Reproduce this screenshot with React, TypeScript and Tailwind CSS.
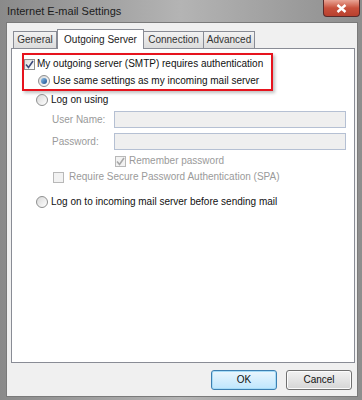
import React from 'react';

const font = { fontFamily: '"Liberation Sans", Arial, sans-serif' };

function Check({ checked, disabled }: { checked?: boolean; disabled?: boolean }) {
  return (
    <span
      className={`inline-flex h-[11px] w-[11px] shrink-0 items-center justify-center border ${
        disabled ? 'border-[#b8b8b8] bg-[#f2f2f2]' : 'border-[#8e8f8f] bg-gradient-to-br from-[#dcdcdc] to-white'
      }`}
    >
      {checked && (
        <svg width="9" height="9" viewBox="0 0 9 9">
          <path
            d="M1 4.5 L3.5 7.5 L8 1"
            fill="none"
            stroke={disabled ? '#a8a8a8' : '#3c4a7a'}
            strokeWidth="1.6"
          />
        </svg>
      )}
    </span>
  );
}

function Radio({ checked }: { checked?: boolean }) {
  return (
    <span className="inline-flex h-[12px] w-[12px] shrink-0 items-center justify-center rounded-full border border-[#8e8f8f] bg-gradient-to-br from-[#d8d8d8] to-white">
      {checked && <span className="h-[6px] w-[6px] rounded-full bg-gradient-to-br from-[#8fc3ec] to-[#1a4f8f]" />}
    </span>
  );
}

export default function App() {
  return (
    <div
      className="flex h-[400px] w-[362px] flex-col bg-gradient-to-r from-[#8a8a8a] via-[#b4b4b4] to-[#8e8e8e] text-[10px] leading-none whitespace-nowrap"
      style={font}
    >
      {/* Title bar */}
      <div className="flex h-[22px] shrink-0 items-start justify-between">
        <span className="pl-[7px] pt-[6px] text-[11px] text-[#1c1c1c]">Internet E-mail Settings</span>
        <div className="mr-[2px] flex h-[17px] w-[37px] items-center justify-center rounded-b-[4px] border border-t-0 border-[#5a2a2a] bg-gradient-to-b from-[#e8a496] via-[#c8503c] to-[#b8402e]">
          <svg width="11" height="9" viewBox="0 0 11 9">
            <path d="M1.5 1 L9.5 8 M9.5 1 L1.5 8" stroke="#fff" strokeWidth="2.4" />
          </svg>
        </div>
      </div>

      {/* Body */}
      <div className="ml-[6px] mr-[4px] mb-[3px] flex flex-1 flex-col border border-[#7a7a7a] bg-[#f0f0f0] px-[4px] pt-[6px]">
        {/* Tabs */}
        <div className="flex items-end pl-[2px] text-[#333]">
          <div className="flex h-[17px] w-[44px] items-center justify-center border border-b-0 border-[#898c95] bg-gradient-to-b from-[#f2f2f2] to-[#dcdcdc]">
            General
          </div>
          <div className="relative z-10 -mb-px flex h-[20px] w-[87px] items-center justify-center border border-b-0 border-[#898c95] bg-white text-[#222]">
            Outgoing Server
          </div>
          <div className="flex h-[17px] w-[60px] items-center justify-center border border-b-0 border-l-0 border-[#898c95] bg-gradient-to-b from-[#f2f2f2] to-[#dcdcdc]">
            Connection
          </div>
          <div className="flex h-[17px] w-[51px] items-center justify-center border border-b-0 border-l-0 border-[#898c95] bg-gradient-to-b from-[#f2f2f2] to-[#dcdcdc]">
            Advanced
          </div>
        </div>

        {/* Panel */}
        <div className="flex h-[315px] w-[344px] flex-col border border-[#898c95] bg-white pt-[4px] pl-[10px] text-[#111]">
          <div className="flex w-[251px] flex-col gap-[3px] border-2 border-[#e6141e] pb-[1px] pt-[2px] shadow-[2px_2px_3px_rgba(0,0,0,0.25)]">
            <div className="flex h-[14px] items-center gap-[2px]">
              <Check checked />
              <span>My outgoing server (SMTP) requires authentication</span>
            </div>
            <div className="flex h-[14px] items-center gap-[3px] pl-[14px]">
              <Radio checked />
              <span>Use same settings as my incoming mail server</span>
            </div>
          </div>

          <div className="mt-[2px] flex h-[14px] items-center gap-[3px] pl-[14px]">
            <Radio />
            <span>Log on using</span>
          </div>

          <div className="mt-[4px] flex flex-col pl-[30px] text-[#9a9a9a]">
            <div className="flex h-[17px] items-center">
              <span className="w-[62px]">User Name:</span>
              <div className="h-[17px] w-[232px] border border-[#b5c0d3] bg-[#efefef]" />
            </div>
            <div className="mt-[5px] flex h-[17px] items-center">
              <span className="w-[62px]">Password:</span>
              <div className="h-[17px] w-[232px] border border-[#b5c0d3] bg-[#efefef]" />
            </div>
            <div className="mt-[4px] flex h-[14px] items-center gap-[3px] pl-[63px]">
              <Check checked disabled />
              <span>Remember password</span>
            </div>
            <div className="mt-[2px] flex h-[14px] items-center gap-[5px] pl-[1px]">
              <Check disabled />
              <span>Require Secure Password Authentication (SPA)</span>
            </div>
          </div>

          <div className="mt-[11px] flex h-[14px] items-center gap-[3px] pl-[14px]">
            <Radio />
            <span>Log on to incoming mail server before sending mail</span>
          </div>
        </div>

        {/* Buttons */}
        <div className="mt-[7px] flex justify-end gap-[9px] pr-[1px] text-[#111]">
          <button className="flex h-[20px] w-[66px] items-center justify-center rounded-[3px] border border-[#3c7fb1] bg-gradient-to-b from-[#eaf6fd] to-[#bee6fd] shadow-[inset_0_0_0_1px_#a6dcf7]">
            OK
          </button>
          <button className="flex h-[20px] w-[66px] items-center justify-center rounded-[3px] border border-[#707070] bg-gradient-to-b from-[#f2f2f2] to-[#d6d6d6] shadow-[inset_0_0_0_1px_#fcfcfc]">
            Cancel
          </button>
        </div>
      </div>
    </div>
  );
}
